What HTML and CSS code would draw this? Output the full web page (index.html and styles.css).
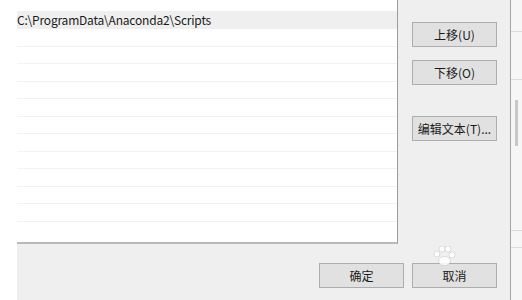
FILE: index.html
```html
<!DOCTYPE html>
<html lang="zh-CN">
<head>
    <meta charset="UTF-8">
    <title>编辑环境变量</title>
    <link rel="stylesheet" href="styles.css">
</head>
<body>
    <div class="screen">
        <div class="gutter"></div>
        <div class="dialog">
            <div class="list">
                <div class="row selected">C:\ProgramData\Anaconda2\Scripts</div>
                <div class="row"></div>
                <div class="row"></div>
                <div class="row"></div>
                <div class="row"></div>
                <div class="row"></div>
                <div class="row"></div>
                <div class="row"></div>
                <div class="row"></div>
                <div class="row"></div>
                <div class="row"></div>
                <div class="row"></div>
            </div>
            <div class="side">
                <button class="btn">上移(U)</button>
                <button class="btn">下移(O)</button>
                <button class="btn edit">编辑文本(T)...</button>
            </div>
            <div class="footer">
                <button class="btn">确定</button>
                <button class="btn">取消</button>
            </div>
            <!-- faint paw from the screenshot watermark -->
            <svg class="paw" width="24" height="20" viewBox="0 0 24 20">
                <circle cx="5" cy="8" r="3"/>
                <circle cx="10" cy="3" r="3"/>
                <circle cx="16" cy="3" r="3"/>
                <circle cx="20" cy="9" r="3"/>
                <ellipse cx="12.5" cy="15" rx="6" ry="4.5"/>
            </svg>
        </div>
        <div class="behind">
            <div class="line"></div>
            <div class="line"></div>
            <div class="thumb"></div>
            <div class="line"></div>
            <div class="line"></div>
        </div>
    </div>
</body>
</html>
```

FILE: styles.css
```css
* {
    margin: 0;
    padding: 0;
    box-sizing: border-box;
}
body {
    background-color: #fff;
    font-family: "Noto Sans CJK SC", "Noto Sans", sans-serif;
    font-size: 12px;
    color: #1a1a1a;
}
.screen {
    display: flex;
    width: 522px;
    height: 300px;
    overflow: hidden;
}
.gutter {
    width: 17px;
    background-color: #fff;
}
.dialog {
    position: relative;
    width: 493px;
    display: grid;
    grid-template-columns: 381px 1fr;
    grid-template-rows: 244px 1fr;
    background-color: #efefef;
}
.list {
    background-color: #fff;
    border-right: 1px solid #9c9c9c;
    border-bottom: 2px solid #b9b9b9;
    padding-top: 11px;
    overflow: hidden;
}
.row {
    height: 17.5px;
    border-bottom: 1px solid #f2f2f2;
    line-height: 17px;
    letter-spacing: -0.2px;
    white-space: nowrap;
}
.row.selected {
    height: 18px;
    background-color: #efefef;
    border-bottom: none;
}
.side {
    display: flex;
    flex-direction: column;
    align-items: flex-start;
    padding: 22px 0 0 14px;
    gap: 13px;
}
.btn {
    width: 85px;
    height: 25px;
    background-color: #e1e1e1;
    border: 1px solid #adadad;
    font-family: "Noto Sans CJK SC", "Noto Sans", sans-serif;
    font-size: 12px;
    color: #1a1a1a;
}
.side .edit {
    margin-top: 18px;
}
.footer {
    grid-column: span 2;
    display: flex;
    justify-content: flex-end;
    gap: 8px;
    padding: 19px 13px 0 0;
}
.paw {
    position: absolute;
    left: 415px;
    top: 246px;
    fill: rgba(255, 255, 255, 0.85);
    stroke: rgba(150, 150, 150, 0.35);
    stroke-width: 0.8;
}
.behind {
    flex: 1;
    border-left: 1px solid #a4a4a4;
    background-color: #f6f6f6;
    position: relative;
}
.line {
    height: 1px;
    background-color: #dcdcdc;
    margin-top: 31px;
}
.line:nth-child(2) {
    margin-top: 47px;
}
.line:nth-child(4) {
    margin-top: 150px;
}
.line:nth-child(5) {
    margin-top: 16px;
}
.thumb {
    position: absolute;
    left: 4px;
    top: 100px;
    width: 3px;
    height: 46px;
    background-color: #c8c8c8;
}
```
